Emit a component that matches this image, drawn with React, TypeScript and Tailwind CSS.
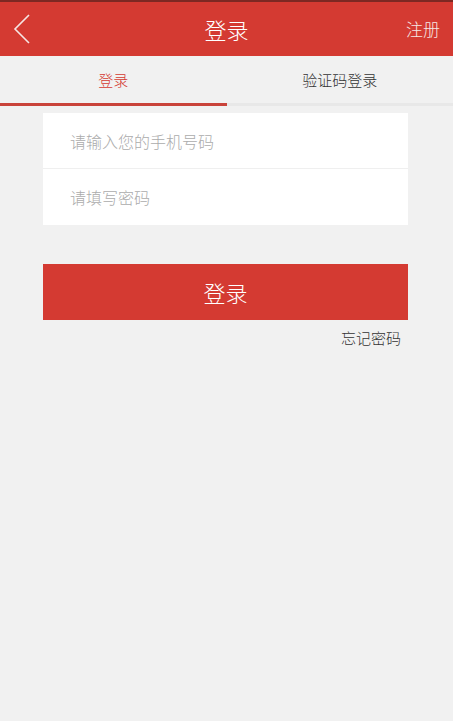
import { useState } from 'react';

const font = { fontFamily: '"Noto Sans CJK SC", "Noto Sans", sans-serif' };

export default function App() {
  const [tab, setTab] = useState<'pwd' | 'code'>('pwd');

  return (
    <div className="w-[453px] h-[721px] bg-[#f1f1f1] font-light" style={font}>
      {/* Header */}
      <div className="border-t-2 border-[#7d2823] bg-[#d43a32] h-[56px] flex items-center relative">
        <button className="w-[40px] h-full flex items-center justify-center pl-1">
          <svg width="18" height="30" viewBox="0 0 18 30" fill="none">
            <path d="M16 1 L2 15 L16 29" stroke="#f6e6e4" strokeWidth="1.6" />
          </svg>
        </button>
        <div className="absolute left-1/2 -translate-x-1/2 text-[22px] text-white">登录</div>
        <div className="ml-auto pr-[13px] text-[17px] text-[#f6e6e4]">注册</div>
      </div>

      {/* Tabs */}
      <div className="flex h-[50px]">
        <button
          onClick={() => setTab('pwd')}
          className={`w-1/2 flex items-center justify-center text-[15px] border-b-[3px] pt-[2px] ${
            tab === 'pwd' ? 'text-[#d43a32] border-[#c9433a]' : 'text-[#333] border-[#e6e6e6]'
          }`}
        >
          登录
        </button>
        <button
          onClick={() => setTab('code')}
          className={`w-1/2 flex items-center justify-center text-[15px] border-b-[3px] pt-[2px] ${
            tab === 'code' ? 'text-[#d43a32] border-[#c9433a]' : 'text-[#333] border-[#e8e8e8]'
          }`}
        >
          验证码登录
        </button>
      </div>

      {/* Inputs */}
      <div className="ml-[43px] mr-[45px] mt-[7px] bg-white">
        <input
          className="w-full h-[56px] px-[27px] text-[16px] text-[#333] placeholder-[#ababab] outline-none border-b border-[#efefef]"
          placeholder="请输入您的手机号码"
        />
        <input
          type="password"
          className="w-full h-[56px] px-[27px] text-[16px] text-[#333] placeholder-[#ababab] outline-none"
          placeholder="请填写密码"
        />
      </div>

      {/* Submit */}
      <div className="ml-[43px] mr-[45px] mt-[39px]">
        <button className="w-full h-[56px] bg-[#d43a32] text-white text-[22px]">登录</button>
        <div className="flex justify-end pr-[7px] mt-[7px] text-[15px] text-[#333]">忘记密码</div>
      </div>
    </div>
  );
}
